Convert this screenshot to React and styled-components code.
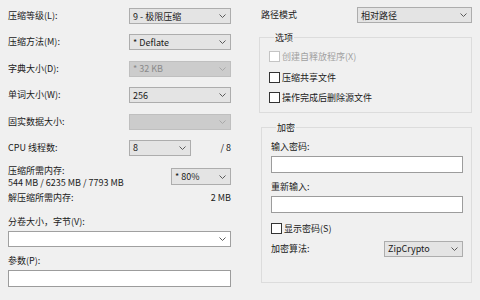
import React from "react";
import styled, { createGlobalStyle, css } from "styled-components";

const Global = createGlobalStyle`
  html, body { margin: 0; padding: 0; background: #f0f0f0; }
  body {
    font-family: "Noto Sans CJK SC", "Noto Sans", "Liberation Sans", sans-serif;
    font-size: 9px;
    color: #1a1a1a;
    width: 480px;
    height: 300px;
    overflow: hidden;
  }
`;

const Page = styled.div`
  display: flex;
  gap: 28px;
  padding: 8px 8px 0 8px;
  box-sizing: border-box;
  width: 480px;
  height: 300px;
`;

const LeftCol = styled.div`
  width: 223px;
  display: flex;
  flex-direction: column;
`;

const RightCol = styled.div`
  width: 213px;
  display: flex;
  flex-direction: column;
  margin-top: -1px;
`;

const Row = styled.div`
  display: grid;
  grid-template-columns: ${(p) => p.$cols || "121px 1fr"};
  align-items: center;
  margin-top: ${(p) => p.$mt || 0}px;
  min-height: ${(p) => p.$h || 16}px;
`;

const Label = styled.div`
  line-height: 12px;
  white-space: nowrap;
  padding-left: ${(p) => p.$pl || 0}px;
  margin-top: ${(p) => p.$mt || 0}px;
  color: ${(p) => (p.$disabled ? "#9a9a9a" : "#1a1a1a")};
`;

const RightText = styled.div`
  text-align: right;
  line-height: 12px;
  white-space: nowrap;
`;

const variants = {
  ro: css`
    background: #e4e4e4;
    border-color: #adadad;
    color: #1a1a1a;
  `,
  disabled: css`
    background: #cccccc;
    border-color: #bfbfbf;
    color: #8a8a8a;
  `,
  edit: css`
    background: #ffffff;
    border-color: #a0a0a0;
    color: #1a1a1a;
  `,
};

const ComboBox = styled.div`
  display: flex;
  align-items: center;
  justify-content: space-between;
  box-sizing: border-box;
  height: ${(p) => p.$h || 16}px;
  width: ${(p) => (p.$w ? p.$w + "px" : "100%")};
  margin-top: ${(p) => p.$mt || 0}px;
  border: 1px solid;
  padding: 0 4px 0 3px;
  white-space: nowrap;
  ${(p) => variants[p.$variant || "ro"]}
`;

const Chevron = styled.svg`
  flex: none;
  width: 7px;
  height: 4px;
`;

const TextInput = styled.div`
  box-sizing: border-box;
  height: ${(p) => p.$h || 17}px;
  margin-top: ${(p) => p.$mt || 0}px;
  background: #ffffff;
  border: 1px solid #9c9c9c;
`;

const Group = styled.fieldset`
  margin: ${(p) => p.$mt || 0}px 0 0 ${(p) => p.$ml || 0}px;
  padding: ${(p) => p.$pt || 0}px 8px ${(p) => p.$pb || 0}px 9px;
  border: 1px solid #dcdcdc;
  min-width: 0;
  display: flex;
  flex-direction: column;
`;

const Legend = styled.legend`
  padding: 0 1px;
  margin-left: 5px;
  line-height: 11px;
  font-size: 9px;
`;

const CheckRow = styled.div`
  display: flex;
  align-items: center;
  gap: 2px;
  height: ${(p) => p.$h || 20.5}px;
  margin-top: ${(p) => p.$mt || 0}px;
  color: ${(p) => (p.$disabled ? "#a0a0a0" : "#1a1a1a")};
  white-space: nowrap;
`;

const Box = styled.span`
  flex: none;
  box-sizing: border-box;
  width: 11px;
  height: 11px;
  background: #ffffff;
  border: 1px solid ${(p) => (p.$disabled ? "#c4c4c4" : "#333333")};
`;

const MemLines = styled.div`
  display: flex;
  flex-direction: column;
  line-height: 12px;
  white-space: nowrap;
`;

function Combo({ value, variant, w, h, mt }) {
  const stroke = variant === "disabled" ? "#a8a8a8" : "#5a5a5a";
  return (
    <ComboBox $variant={variant} $w={w} $h={h} $mt={mt}>
      <span>{value}</span>
      <Chevron viewBox="0 0 7 4">
        <polyline points="0.5,0.5 3.5,3.5 6.5,0.5" fill="none" stroke={stroke} strokeWidth="1" />
      </Chevron>
    </ComboBox>
  );
}

function Check({ label, disabled, mt, h }) {
  return (
    <CheckRow $disabled={disabled} $mt={mt} $h={h}>
      <Box $disabled={disabled} />
      <span>{label}</span>
    </CheckRow>
  );
}

export default function App() {
  return (
    <>
      <Global />
      <Page>
        <LeftCol>
          <Row>
            <Label>压缩等级(L):</Label>
            <Combo value="9 - 极限压缩" />
          </Row>
          <Row $mt={10.4}>
            <Label>压缩方法(M):</Label>
            <Combo value="* Deflate" />
          </Row>
          <Row $mt={10.4}>
            <Label>字典大小(D):</Label>
            <Combo value="* 32 KB" variant="disabled" />
          </Row>
          <Row $mt={10.4}>
            <Label>单词大小(W):</Label>
            <Combo value="256" />
          </Row>
          <Row $mt={10.4}>
            <Label>固实数据大小:</Label>
            <Combo value="" variant="disabled" />
          </Row>
          <Row $mt={10.4} $cols="121px 62px 1fr">
            <Label>CPU 线程数:</Label>
            <Combo value="8" />
            <RightText>/ 8</RightText>
          </Row>
          <Row $mt={9} $cols="1fr 60px" $h={24}>
            <MemLines>
              <span>压缩所需内存:</span>
              <span>544 MB / 6235 MB / 7793 MB</span>
            </MemLines>
            <Combo value="* 80%" h={17} />
          </Row>
          <Row $mt={3} $cols="1fr auto" $h={12}>
            <Label>解压缩所需内存:</Label>
            <RightText>2 MB</RightText>
          </Row>
          <Label $mt={12}>分卷大小，字节(V):</Label>
          <Combo value="" variant="edit" mt={3} />
          <Label $mt={8}>参数(P):</Label>
          <TextInput $mt={3} />
        </LeftCol>

        <RightCol>
          <Row $cols="98px 1fr">
            <Label $pl={2}>路径模式</Label>
            <Combo value="相对路径" />
          </Row>
          <Group $mt={8.5} $pt={4} $pb={3.5}>
            <Legend>选项</Legend>
            <Check label="创建自释放程序(X)" disabled />
            <Check label="压缩共享文件" />
            <Check label="操作完成后删除源文件" />
          </Group>
          <Group $mt={9.5} $ml={2} $pt={7.5} $pb={25}>
            <Legend>加密</Legend>
            <Label>输入密码:</Label>
            <TextInput $mt={3} />
            <Label $mt={8}>重新输入:</Label>
            <TextInput $mt={3} />
            <Check label="显示密码(S)" mt={10} h={12} />
            <Row $mt={6} $cols="1fr 79px">
              <Label>加密算法:</Label>
              <Combo value="ZipCrypto" />
            </Row>
          </Group>
        </RightCol>
      </Page>
    </>
  );
}
